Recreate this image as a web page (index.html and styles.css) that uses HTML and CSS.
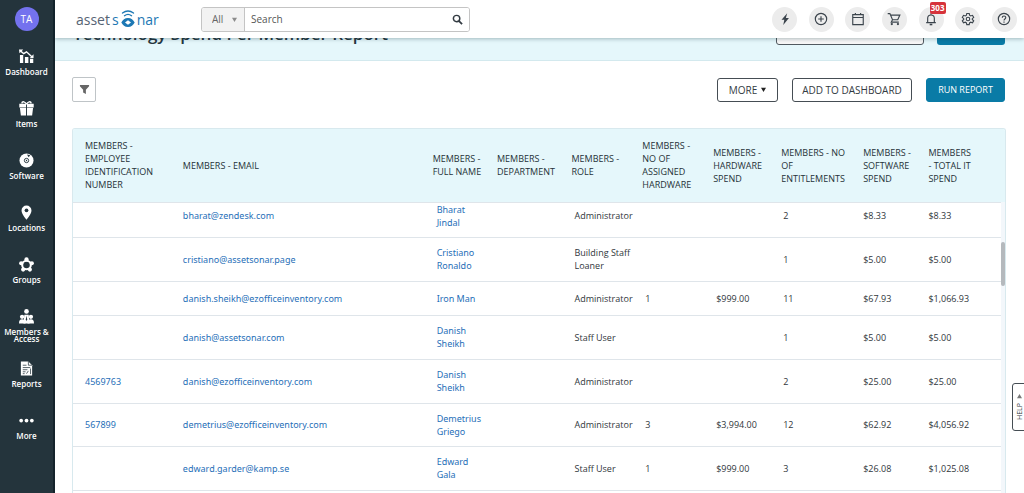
FILE: index.html
```html
<!DOCTYPE html>
<html lang="en">
<head>
<meta charset="utf-8">
<meta name="viewport" content="width=device-width, initial-scale=1">
<title>Technology Spend Per Member Report</title>
<link rel="stylesheet" href="styles.css">
</head>
<body>
<div class="app">
  <nav class="sidebar" aria-label="Main">
    <div class="avatar">TA</div>
    <a class="nav-item" href="#"><svg viewBox="0 0 16 16"><path d="M1 6.500h3.500V15H1zM6.300 8.500H10V15H6.300zM11.700 10.500h3.500V15h-3.500z" fill="#fff"/><path d="M1.500 2 5 5l3-2 6 5.500" fill="none" stroke="#fff" stroke-width="1.500"/><path d="M0 .5h4.500L.5 4.500zM11.500 9.500h4V5.500z" fill="#fff"/></svg><span>Dashboard</span></a>
    <a class="nav-item" href="#"><svg viewBox="0 0 16 16"><path d="M.3 3h7.200v4H.3zM8.500 3h7.200v4H8.500zM1 7.500h6.500V15.500H2zM8.500 7.500H15l-1 8H8.500z" fill="#fff"/><path d="M8 3.500C6.500.5 3.500 0 3 2.500M8 3.500c1.500-3 4.500-3.500 5-1" fill="none" stroke="#fff" stroke-width="1.600"/></svg><span>Items</span></a>
    <a class="nav-item" href="#"><svg viewBox="0 0 16 16"><circle cx="8" cy="8" r="7.500" fill="#fff"/><circle cx="8" cy="8" r="2.300" fill="none" stroke="#24343c" stroke-width="1"/><circle cx="8" cy="8" r=".7" fill="#24343c"/><path d="m8.500 1.500 3.500.8-1.700 2.200z" fill="#24343c"/></svg><span>Software</span></a>
    <a class="nav-item" href="#"><svg viewBox="0 0 16 16"><path d="M8 .5a5.300 5.300 0 0 0-5.300 5.300C2.700 9.500 8 15.700 8 15.700s5.300-6.200 5.300-9.900A5.300 5.300 0 0 0 8 .5z" fill="#fff"/><circle cx="8" cy="5.700" r="2" fill="#24343c"/></svg><span>Locations</span></a>
    <a class="nav-item" href="#"><svg viewBox="0 0 16 16"><circle cx="8" cy="8.500" r="4.600" fill="none" stroke="#fff" stroke-width="2.200"/><g fill="#fff"><circle cx="8" cy="2.600" r="2.300"/><circle cx="2.300" cy="6.700" r="2.200"/><circle cx="13.700" cy="6.700" r="2.200"/><circle cx="4.400" cy="13.400" r="2.200"/><circle cx="11.600" cy="13.400" r="2.200"/></g></svg><span>Groups</span></a>
    <a class="nav-item" href="#"><svg viewBox="0 0 16 16"><g fill="#fff"><circle cx="8" cy="2.600" r="2.500"/><path d="M5.700 6h4.600l1 9.500H4.700z"/><circle cx="3.300" cy="8.300" r="2.300"/><circle cx="12.700" cy="8.300" r="2.300"/><path d="M0 15.500c0-3 1-4.500 3.300-4.500S6.500 12 7 15.500zM9 15.500c.5-3.500 1.400-4.500 3.700-4.500s3.300 1.500 3.300 4.500z"/></g><path d="m8 7-.7 4 .7 2 .7-2z" fill="#24343c"/></svg><span>Members &amp;<br>Access</span></a>
    <a class="nav-item" href="#"><svg viewBox="0 0 16 16"><path d="M2 .5h8L14 4.500v11H2z" fill="#fff"/><path d="M10 .5v4h4M4 4.500h4M4 7h8M4 9.300h5M4 11.500h3M4 13.500h2M8 13.500l2-3M12.300 8v6" fill="none" stroke="#24343c" stroke-width=".8"/></svg><span>Reports</span></a>
    <a class="nav-item" href="#"><svg viewBox="0 0 16 16"><g fill="#fff"><circle cx="2.300" cy="8" r="2"/><circle cx="8" cy="8" r="2"/><circle cx="13.700" cy="8" r="2"/></g></svg><span>More</span></a>
  </nav>

  <div class="main">
    <header class="topbar">
      <a class="logo" href="#" aria-label="AssetSonar">
        <span class="logo-gray">asset</span><span>s</span>
        <svg viewBox="0 0 14 18"><path fill-rule="evenodd" d="M7 8c3.200 0 5.300 2 6.700 4.500C12.300 15 10.200 17 7 17S1.700 15 .3 12.500C1.700 10 3.800 8 7 8zm0 2.200L4 12.500l3 2.300 3-2.300z" fill="#1d78b4"/><path d="M1.500 3Q7-1 12.500 3M3.500 5.700Q7 3 10.500 5.700" fill="none" stroke="#1d78b4" stroke-width="1.300" stroke-linecap="round"/></svg>
        <span>nar</span>
      </a>
      <form class="search">
        <div class="scope"><select aria-label="Search in"><option>All</option></select><svg viewBox="0 0 6 6"><path d="M0 1h6L3 6z" fill="#8b8b8b"/></svg></div>
        <input type="text" placeholder="Search" aria-label="Search">
        <button type="button" aria-label="Submit search"><svg viewBox="0 0 12 12"><circle cx="5" cy="5" r="3.500" fill="none" stroke="#333b42" stroke-width="1.600"/><path d="m7.700 7.700 3.300 3.300" stroke="#333b42" stroke-width="2"/></svg></button>
      </form>
      <div class="tools">
        <button aria-label="Quick actions"><svg viewBox="0 0 16 16"><path d="M10.500 1.500 4 8.800h3.200L6 14.800l6.500-8H9z" fill="#3b444c"/></svg></button>
        <button aria-label="Add"><svg viewBox="0 0 16 16"><circle cx="8" cy="8" r="6.500"/><path d="M8 4.800v6.400M4.800 8h6.400"/></svg></button>
        <button aria-label="Calendar"><svg viewBox="0 0 16 16"><path d="M2 3h12v11.500H2zM2 6.300h12M5 1v2M11 1v2"/></svg></button>
        <button aria-label="Cart"><svg viewBox="0 0 16 16"><path d="M.8 1.800h2.500l3 7h6l2.400-5.300H4.200M6.300 8.800 4.900 11.500H13.500"/><circle cx="5.500" cy="13.800" r="1.300" fill="#3b444c" stroke="none"/><circle cx="12.500" cy="13.800" r="1.300" fill="#3b444c" stroke="none"/></svg></button>
        <button aria-label="Notifications"><svg viewBox="0 0 16 16"><path d="M2.500 12.200h11M4.200 12V7.200a3.800 3.800 0 0 1 7.600 0V12M8 1.500v2"/><path d="M6.500 14.300h3" stroke-width="1.800"/></svg><span class="badge">303</span></button>
        <button aria-label="Settings"><svg viewBox="0 0 16 16"><path d="M6.600 1.700h2.800l.4 2 1.300.8 2-.7 1.400 2.400-1.600 1.400v1l1.600 1.400-1.400 2.400-2-.7-1.300.8-.4 2H6.600l-.4-2-1.300-.8-2 .7L1.500 10l1.600-1.400v-1L1.500 6.200l1.400-2.400 2 .7 1.300-.8z"/><circle cx="8" cy="8" r="2"/></svg></button>
        <button aria-label="Help"><svg viewBox="0 0 16 16"><circle cx="8" cy="8" r="6.500"/><path d="M6 6.600c0-2.700 4-2.600 4-.2C10 8 8 8 8 9.700M8 10.800v1.400"/></svg></button>
      </div>
    </header>

    <section class="banner">
      <h1>Technology Spend Per Member Report</h1>
      <div class="banner-actions"><span class="banner-field"></span><span class="banner-button"></span></div>
    </section>

    <div class="content">
      <div class="actions">
        <button class="filter" aria-label="Filter"><svg viewBox="0 0 12 12"><path d="M1 1h10v1.500L7.500 6.300V11l-3-1.800V6.300L1 2.500z" fill="#666"/></svg></button>
        <button class="btn btn-more">MORE <svg viewBox="0 0 6 6"><path d="M0 1h6L3 6z" fill="#222"/></svg></button>
        <button class="btn btn-add">ADD TO DASHBOARD</button>
        <button class="btn btn-run">RUN REPORT</button>
      </div>

      <div class="card">
        <table>
          <colgroup><col class="c-id"><col class="c-email"><col class="c-name"><col class="c-dept"><col class="c-role"><col class="c-assigned"><col class="c-hard"><col class="c-ent"><col class="c-soft"><col class="c-total"></colgroup>
          <thead><tr>
            <th>MEMBERS -<br>EMPLOYEE<br>IDENTIFICATION<br>NUMBER</th><th>MEMBERS - EMAIL</th><th>MEMBERS -<br>FULL NAME</th><th>MEMBERS -<br>DEPARTMENT</th><th>MEMBERS -<br>ROLE</th><th>MEMBERS -<br>NO OF<br>ASSIGNED<br>HARDWARE</th><th>MEMBERS -<br>HARDWARE<br>SPEND</th><th>MEMBERS - NO<br>OF<br>ENTITLEMENTS</th><th>MEMBERS -<br>SOFTWARE<br>SPEND</th><th>MEMBERS<br>- TOTAL IT<br>SPEND</th>
          </tr></thead>
          <tbody>
            <tr class="first"><td></td><td><a href="#">bharat@zendesk.com</a></td><td><a href="#">Bharat<br>Jindal</a></td><td></td><td>Administrator</td><td></td><td></td><td>2</td><td>$8.33</td><td>$8.33</td></tr>
            <tr><td></td><td><a href="#">cristiano@assetsonar.page</a></td><td><a href="#">Cristiano<br>Ronaldo</a></td><td></td><td>Building Staff<br>Loaner</td><td></td><td></td><td>1</td><td>$5.00</td><td>$5.00</td></tr>
            <tr class="single"><td></td><td><a href="#">danish.sheikh@ezofficeinventory.com</a></td><td><a href="#">Iron Man</a></td><td></td><td>Administrator</td><td>1</td><td>$999.00</td><td>11</td><td>$67.93</td><td>$1,066.93</td></tr>
            <tr><td></td><td><a href="#">danish@assetsonar.com</a></td><td><a href="#">Danish<br>Sheikh</a></td><td></td><td>Staff User</td><td></td><td></td><td>1</td><td>$5.00</td><td>$5.00</td></tr>
            <tr><td><a href="#">4569763</a></td><td><a href="#">danish@ezofficeinventory.com</a></td><td><a href="#">Danish<br>Sheikh</a></td><td></td><td>Administrator</td><td></td><td></td><td>2</td><td>$25.00</td><td>$25.00</td></tr>
            <tr class="short"><td><a href="#">567899</a></td><td><a href="#">demetrius@ezofficeinventory.com</a></td><td><a href="#">Demetrius<br>Griego</a></td><td></td><td>Administrator</td><td>3</td><td>$3,994.00</td><td>12</td><td>$62.92</td><td>$4,056.92</td></tr>
            <tr><td></td><td><a href="#">edward.garder@kamp.se</a></td><td><a href="#">Edward<br>Gala</a></td><td></td><td>Staff User</td><td>1</td><td>$999.00</td><td>3</td><td>$26.08</td><td>$1,025.08</td></tr>
            <tr><td></td><td></td><td></td><td></td><td></td><td></td><td></td><td></td><td></td><td></td></tr>
          </tbody>
        </table>
        <div class="scrollbar"><div class="thumb"></div></div>
      </div>
    </div>
  </div>
  <button class="help-tab">HELP <svg viewBox="0 0 6 6"><path d="M1 0v6l5-3z" fill="#777"/></svg></button>
</div>
</body>
</html>
```
FILE: styles.css
```css
* { box-sizing: border-box; }
body { margin: 0; font-family: "Open Sans", "Noto Sans", sans-serif; color: #333b42; background: #fff; }
button, input, select { font: inherit; color: inherit; }
button { padding: 0; cursor: pointer; }
a { text-decoration: none; color: #1f6fb8; }
svg { display: block; flex: none; }

.app { display: flex; position: relative; height: 100vh; overflow: hidden; }

.sidebar { flex: none; width: 55px; background: #24343c; border-right: 2px solid #14232b; display: flex; flex-direction: column; align-items: center; padding-top: 7px; }
.avatar { width: 24px; height: 24px; border-radius: 50%; background: #7472ee; color: #fff; font-size: 10px; line-height: 24px; text-align: center; flex: none; margin-bottom: 18px; }
.nav-item { flex: none; height: 52px; width: 100%; display: flex; flex-direction: column; align-items: center; gap: 4px; color: #fff; font: 600 8px/7px "Open Sans", "Noto Sans", sans-serif; text-align: center; white-space: nowrap; }
.nav-item svg { width: 15px; height: 15px; }

.main { flex: 1; min-width: 0; display: flex; flex-direction: column; }
.topbar { flex: none; height: 38px; display: flex; align-items: center; padding: 0 7px 0 21px; background: #fff; box-shadow: 0 1px 4px rgba(0, 40, 50, .3); position: relative; z-index: 2; }
.logo { display: flex; align-items: center; gap: 2px; width: 125px; font-size: 14px; line-height: 18px; color: #1d78b4; }
.logo span { margin-top: 2px; }
.logo svg { width: 14px; height: 18px; }
.logo-gray { color: #566474; }
.search { display: flex; width: 269px; height: 25px; border: 1px solid #c4c4c4; border-radius: 3px; font-size: 10px; overflow: hidden; }
.scope { width: 43px; background: #f2f2f2; border-right: 1px solid #c4c4c4; display: flex; align-items: center; padding: 0 7px 0 10px; color: #666; }
.scope select { appearance: none; border: 0; background: transparent; padding: 0; flex: 1; min-width: 0; }
.scope svg { width: 5px; height: 5px; }
.search input { flex: 1; min-width: 0; border: 0; padding: 0 6px; background: #fff; outline: 0; }
.search input::placeholder { color: #555; opacity: 1; }
.search button { width: 23px; border: 0; background: #fff; display: grid; place-items: center; }
.search button svg { width: 11px; height: 11px; }
.tools { margin-left: auto; width: 245px; display: flex; justify-content: space-between; }
.tools button { position: relative; width: 25px; height: 25px; border: 0; border-radius: 50%; background: #ececec; display: grid; place-items: center; }
.tools svg { width: 14px; height: 14px; fill: none; stroke: #3b444c; stroke-width: 1.3; }
.tools button:first-child svg { stroke: none; }
.badge { position: absolute; left: 11px; top: -5px; width: 16px; height: 12px; border-radius: 2px; background: #d6333b; color: #fff; font-size: 8px; font-weight: 700; line-height: 12px; text-align: center; }

.banner { flex: none; height: 23px; background: #e5f7fb; border-bottom: 1px solid #d3e9ee; display: flex; align-items: flex-end; justify-content: space-between; padding: 0 19px 15px 18px; }
.banner h1 { margin: 0; font-size: 17px; line-height: 22px; font-weight: 600; color: #263640; }
.banner-actions { display: flex; gap: 13px; }
.banner-field, .banner-button { height: 30px; border-radius: 3px; }
.banner-field { width: 148px; background: #f7f7f7; border: 1px solid #50595f; }
.banner-button { width: 68px; background: #0a7ba6; }

.content { flex: 1; min-height: 0; padding: 16px 18px 0 17px; display: flex; flex-direction: column; gap: 26px; }
.actions { display: flex; align-items: center; gap: 14px; padding-right: 1px; font-size: 10px; }
.filter { width: 24px; height: 25px; border: 1px solid #bfc4c7; border-radius: 2px; background: #fff; display: grid; place-items: center; margin-right: auto; }
.filter svg { width: 11px; height: 11px; }
.btn { height: 24px; border: 1px solid #454d53; border-radius: 3px; background: #fff; display: flex; align-items: center; justify-content: center; gap: 4px; }
.btn svg { width: 5px; height: 5px; }
.btn-more { width: 61px; }
.btn-add { width: 120px; }
.btn-run { width: 79px; background: #0a7ba6; border-color: #0a7ba6; color: #fff; font-size: 9px; }

.card { position: relative; flex: 1; min-height: 0; overflow: hidden; border: 1px solid #d8e9ee; border-bottom: 0; border-radius: 3px 3px 0 0; }
table { width: 100%; table-layout: fixed; border-collapse: collapse; font-size: 9px; line-height: 13px; }
.c-id { width: 10.5%; }
.c-email { width: 26.8%; }
.c-name { width: 6.9%; }
.c-dept { width: 8%; }
.c-role { width: 7.6%; }
.c-assigned { width: 7.6%; }
.c-hard { width: 7.3%; }
.c-ent { width: 8.8%; }
.c-soft { width: 7%; }
.c-total { width: 9.5%; }
th, td { text-align: left; vertical-align: middle; white-space: nowrap; padding: 0 0 0 12px; }
th { height: 73px; background: #e5f7fb; font-weight: 400; color: #263238; }
td { height: 44px; border-top: 1px solid #dfe5ea; color: #30363b; }
td a { font-family: "Noto Sans", "Open Sans", sans-serif; }
.first td { height: 35px; padding-bottom: 8px; }
.single td { height: 34px; }
.short td { height: 43px; }
td:nth-child(3) { padding-left: 16px; }
td:nth-child(n+5):nth-child(-n+7) { padding-left: 15px; }
td:nth-child(8) { padding-left: 14px; }
.scrollbar { position: absolute; top: 73px; right: 0; bottom: 0; width: 4px; background: #f3f7fb; }
.thumb { height: 44px; margin-top: 40px; border-radius: 2px; background: #b5b9bd; }

.help-tab { position: absolute; z-index: 3; right: -3px; top: 383px; width: 15px; height: 48px; border: 1px solid #454d53; border-radius: 0 3px 3px 0; background: #fff; writing-mode: vertical-rl; transform: rotate(180deg); font-size: 7px; line-height: 8px; display: flex; align-items: center; justify-content: center; gap: 4px; }
.help-tab svg { width: 5px; height: 5px; transform: rotate(90deg); }
```
